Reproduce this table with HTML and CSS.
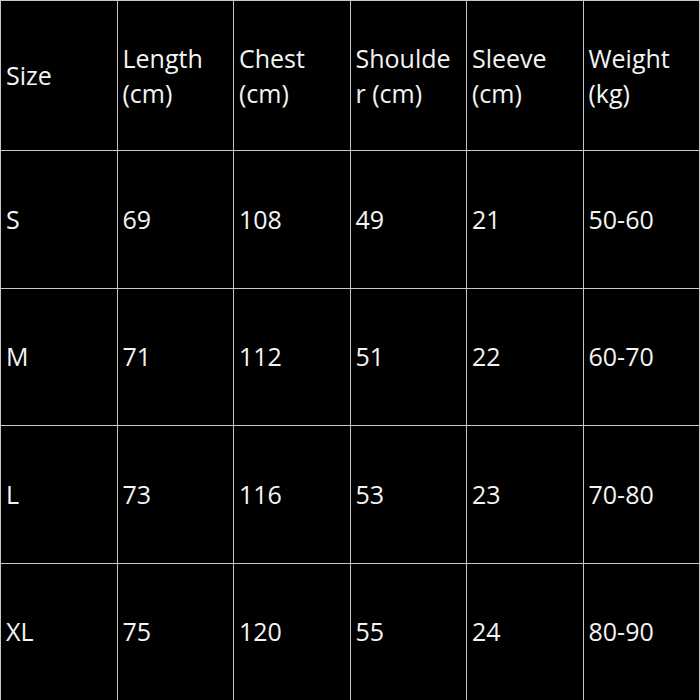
FILE: index.html
```html
<!DOCTYPE html>
<html lang="en">
<head>
<meta charset="utf-8">
<title>Size Chart</title>
<link rel="stylesheet" href="styles.css">
</head>
<body>
<table class="chart">
  <tr class="head">
    <td>Size</td>
    <td>Length (cm)</td>
    <td>Chest (cm)</td>
    <td>Shoulder (cm)</td>
    <td>Sleeve (cm)</td>
    <td>Weight (kg)</td>
  </tr>
  <tr class="row">
    <td>S</td><td>69</td><td>108</td><td>49</td><td>21</td><td>50-60</td>
  </tr>
  <tr class="row">
    <td>M</td><td>71</td><td>112</td><td>51</td><td>22</td><td>60-70</td>
  </tr>
  <tr class="row">
    <td>L</td><td>73</td><td>116</td><td>53</td><td>23</td><td>70-80</td>
  </tr>
  <tr class="row">
    <td>XL</td><td>75</td><td>120</td><td>55</td><td>24</td><td>80-90</td>
  </tr>
</table>
</body>
</html>
```
FILE: styles.css
```css
html, body {
  margin: 0;
  padding: 0;
  background: #000;
}
.chart {
  width: 700px;
  height: 700px;
  border-collapse: collapse;
  table-layout: fixed;
  font-family: "Open Sans", "Liberation Sans", sans-serif;
  font-size: 25px;
  line-height: 1.4;
  color: #f4f4f4;
}
.chart td {
  border: 1px solid #c8c8c8;
  padding: 0 9px 0 5px;
  vertical-align: middle;
  text-align: left;
  overflow-wrap: anywhere;
}
.head {
  height: 150px;
}
.row {
  height: 137.5px;
}
```
